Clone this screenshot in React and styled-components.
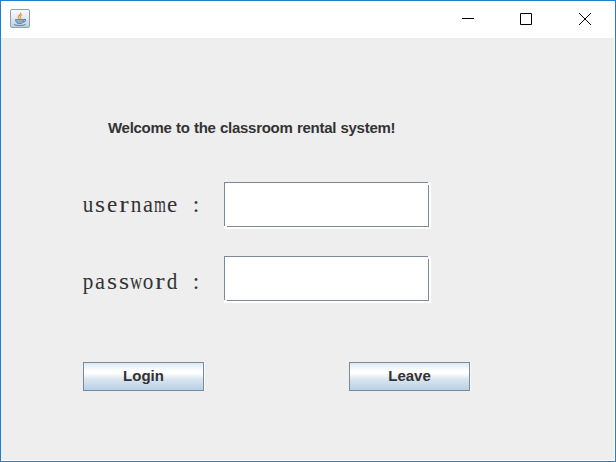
import React from "react";
import styled, { createGlobalStyle } from "styled-components";

const GlobalStyle = createGlobalStyle`
  * { box-sizing: border-box; }
  body { margin: 0; overflow: hidden; }
`;

const Window = styled.div`
  width: 616px;
  height: 462px;
  display: flex;
  flex-direction: column;
  background: #fff;
  border: 1px solid #1c80d4;
  color: #333;
  font-family: "Liberation Sans", Arial, sans-serif;
`;

const TitleBar = styled.header`
  height: 37px;
  flex: none;
  display: flex;
  justify-content: space-between;
  padding-left: 9px;
`;

const AppIcon = styled.svg`
  width: 20px;
  height: 20px;
  margin-top: 8px;
`;

const Controls = styled.div`
  display: flex;
`;

const ControlButton = styled.button`
  width: ${(p) => p.$width}px;
  height: 35px;
  padding: 0;
  border: 0;
  background: none;
  display: flex;
  align-items: center;
  justify-content: center;
`;

const Content = styled.main`
  flex: 1;
  margin: 0 1px 1px 0;
  background: #eee;
  padding: 81px 0 0 81px;
`;

const Heading = styled.h1`
  margin: 0 0 0 26px;
  height: 18px;
  line-height: 18px;
  font-size: 15px;
  font-weight: bold;
  letter-spacing: -0.28px;
  word-spacing: 0.5px;
  white-space: nowrap;
`;

const Form = styled.form`
  display: flex;
  flex-direction: column;
`;

const Row = styled.div`
  display: flex;
  height: 47px;
  margin-top: ${(p) => p.$gap}px;
`;

const Label = styled.label`
  width: 142px;
  padding-top: ${(p) => p.$top}px;
  font: 23.5px/24px "Liberation Serif", serif;
  white-space: pre;
`;

const Cell = styled.span`
  display: inline-flex;
  justify-content: center;
  width: 12px;
  white-space: pre;
  transform: scaleX(${(p) => p.$scale});
`;

const FieldFrame = styled.div`
  position: relative;
  width: 207px;
  height: 47px;
  padding: 0 2px 2px 0;
  background: #fff;

  &::before,
  &::after {
    content: "";
    position: absolute;
    background: #fbfbfb;
  }
  &::before {
    top: 0;
    right: 0;
    width: 3px;
    height: 3px;
  }
  &::after {
    left: 0;
    bottom: 2px;
    width: 3px;
    height: 1px;
  }
`;

const Field = styled.input`
  display: block;
  width: 205px;
  height: 45px;
  padding: 0 4px;
  border: 1px solid #7a8a99;
  border-radius: 0;
  outline: 0;
  background: #fff;
  font: 20px "Liberation Mono", monospace;
`;

const Actions = styled.div`
  display: flex;
  gap: 145px;
  margin: 59px 0 0 1px;
`;

const Button = styled.button`
  width: 121px;
  height: 29px;
  padding: 0 0 2px;
  border: 1px solid #7a8a99;
  box-shadow: 1px 0 #f8f8f8;
  background: linear-gradient(#dde8f3 0%, #fff 30%, #fff 38%, #dce7f1 58%, #b8cfe5 100%);
  color: #333;
  font: bold 15px "Liberation Sans", Arial, sans-serif;
`;

const glyphScale = { m: 0.65, w: 0.72, a: 0.96, e: 0.98, r: 1.2, s: 1.1, ":": 1 };

function MonoText({ children }) {
  return [...children].map((ch, i) => (
    <Cell key={i} $scale={glyphScale[ch] ?? 0.9}>{ch}</Cell>
  ));
}

function JavaIcon() {
  return (
    <AppIcon viewBox="0 0 20 20">
      <defs>
        <linearGradient id="tile" x2="0" y2="1">
          <stop stopColor="#fafcfe" />
          <stop offset=".5" stopColor="#e0e8f0" />
          <stop offset="1" stopColor="#bdcddd" />
        </linearGradient>
      </defs>
      <rect x=".5" y=".5" width="19" height="18" rx="1.5" fill="url(#tile)" stroke="#8ba1b7" />
      <path d="M10.5 3.5c1.5 2-3 2.7-2.2 4.7.3.8 1 1 1 1.6M12 5.5c-1.4 1-2.3 1.7-1.4 2.8.4.6.2 1.1-.3 1.5" fill="none" stroke="#eda03c" strokeWidth="1.3" />
      <path d="M5.5 10.5h8.2c0 2-.8 3.7-2.2 4H8c-1.5-.4-2.4-2-2.5-4Z" fill="#92abc4" stroke="#5f83a8" strokeWidth=".9" />
      <path d="M13.5 10.5c3-.6 2.8 2.2-.8 2.5M4 15.4c2 1.5 9.5 1.5 11.5 0" fill="none" stroke="#5f83a8" strokeWidth="1.1" />
    </AppIcon>
  );
}

function ControlIcon({ d }) {
  return (
    <svg width="12" height="12" viewBox="0 0 12 12">
      <path d={d} fill="none" stroke="#000" />
    </svg>
  );
}

export default function App() {
  return (
    <>
      <GlobalStyle />
      <Window>
        <TitleBar>
          <JavaIcon />
          <Controls>
            <ControlButton $width={58} aria-label="Minimize">
              <ControlIcon d="M0 5.5h12" />
            </ControlButton>
            <ControlButton $width={58} aria-label="Maximize">
              <ControlIcon d="M.5.5h11v11H.5z" />
            </ControlButton>
            <ControlButton $width={60} aria-label="Close">
              <ControlIcon d="M0 0l12 12M12 0L0 12" />
            </ControlButton>
          </Controls>
        </TitleBar>
        <Content>
          <Heading>Welcome to the classroom rental system!</Heading>
          <Form>
            <Row $gap={45}>
              <Label $top={10} htmlFor="username"><MonoText>username :</MonoText></Label>
              <FieldFrame><Field id="username" /></FieldFrame>
            </Row>
            <Row $gap={27}>
              <Label $top={13} htmlFor="password"><MonoText>password :</MonoText></Label>
              <FieldFrame><Field id="password" type="password" /></FieldFrame>
            </Row>
            <Actions>
              <Button type="button">Login</Button>
              <Button type="button">Leave</Button>
            </Actions>
          </Form>
        </Content>
      </Window>
    </>
  );
}
